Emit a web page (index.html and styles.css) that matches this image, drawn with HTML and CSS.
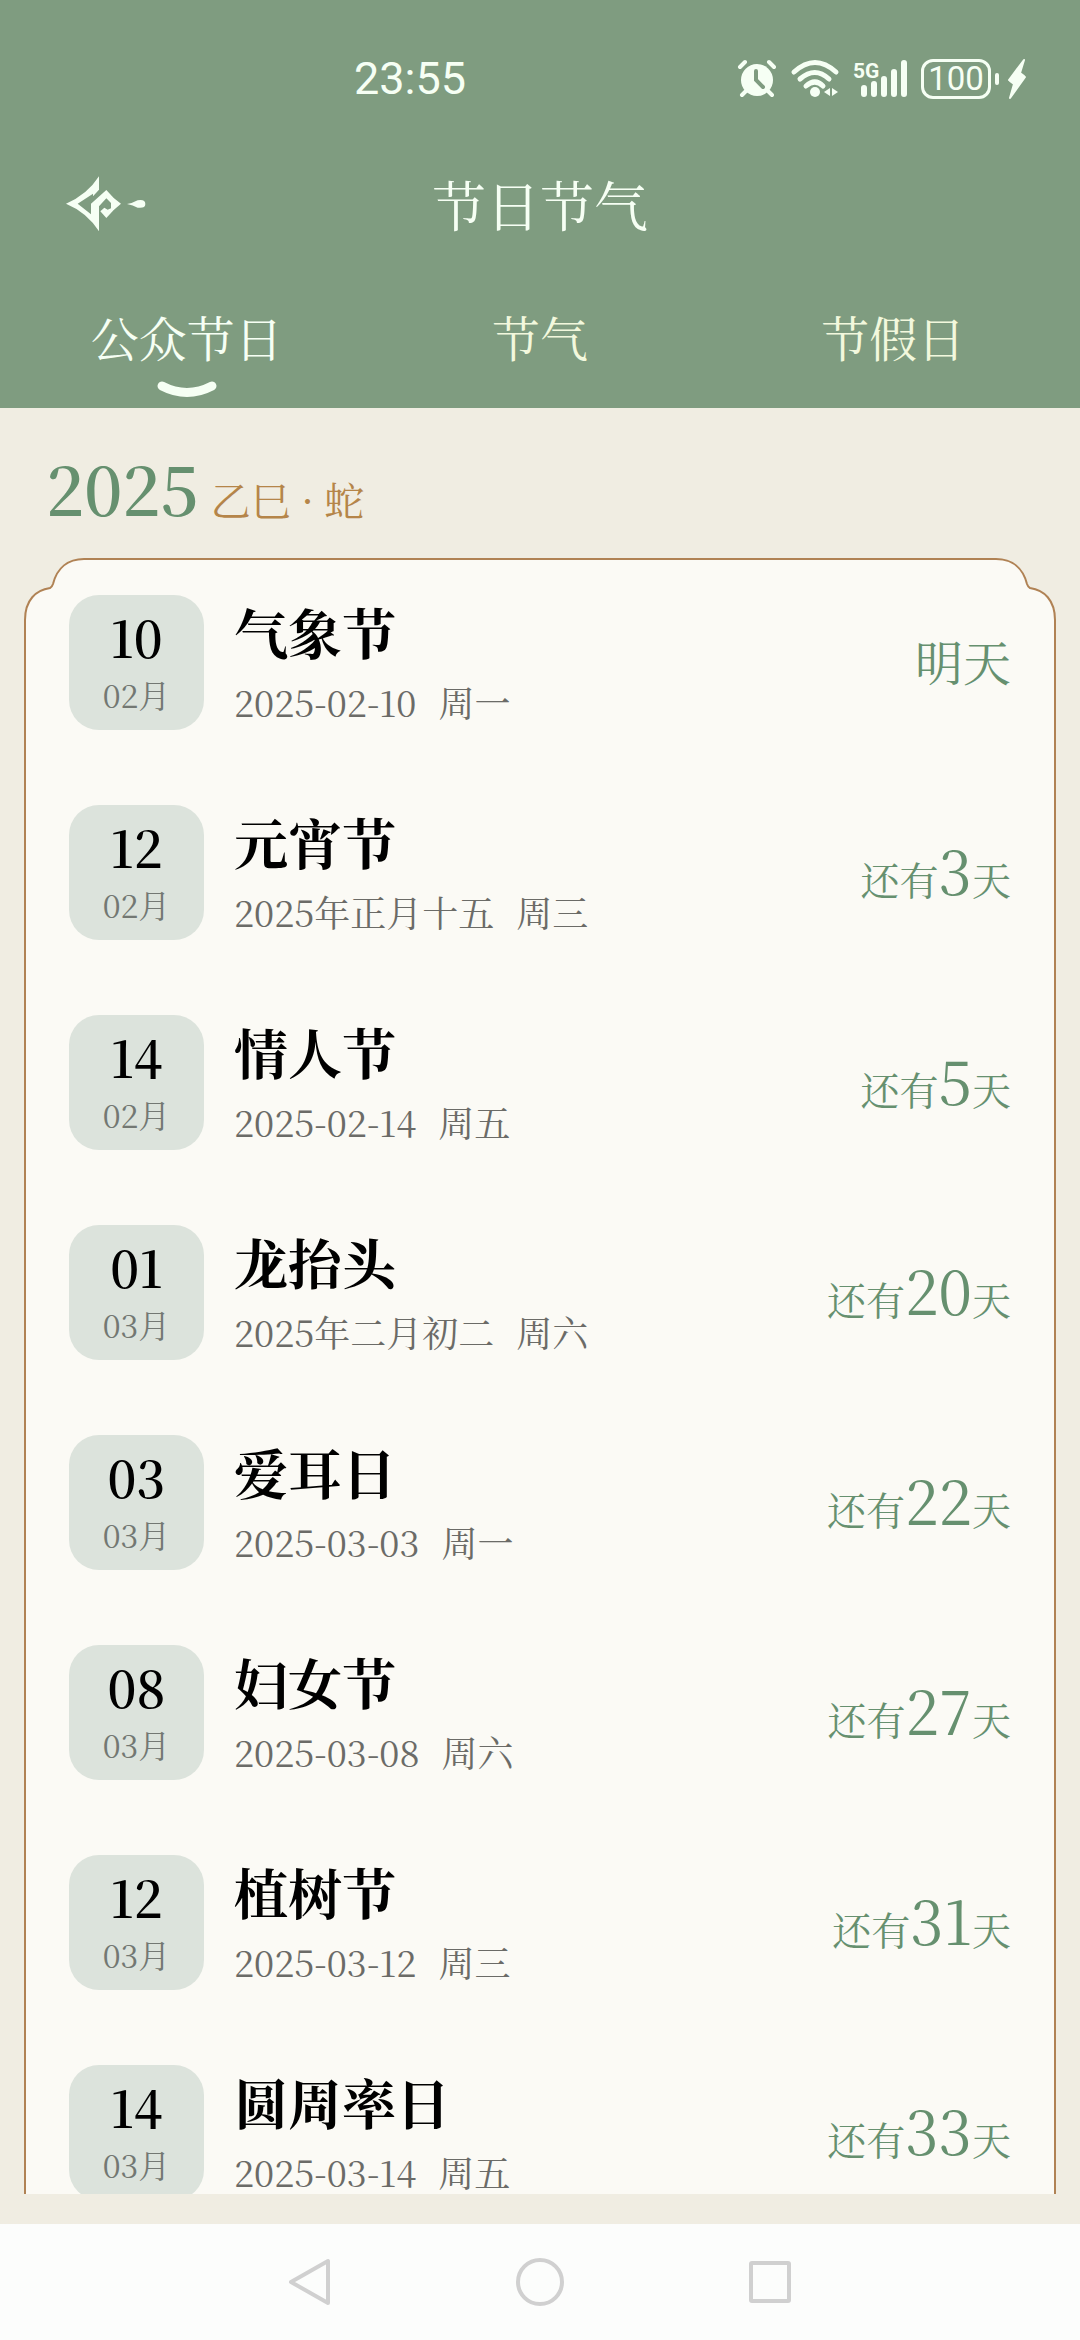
FILE: index.html
```
<!DOCTYPE html>
<html lang="zh-CN">
<head>
  <meta charset="UTF-8">
  <meta name="viewport" content="width=device-width, initial-scale=1.0">
  <title>节日节气</title>
  <link rel="stylesheet" href="styles.css">
</head>
<body>
  <header class="header">
    <div class="status-bar">
      <time class="clock">23:55</time>
      <div class="status-icons">
        <svg class="icon-alarm" width="40" height="38" viewBox="0 0 40 38" fill="#f6fff4">
          <circle cx="20" cy="20" r="16"/>
          <path d="M3 7L8 2M37 7l-5-5M9 31l-4 4M31 31l4 4" stroke="#f6fff4" stroke-width="4" stroke-linecap="round"/>
          <path d="M19 11v9l7 7" fill="none" stroke="#7f9c80" stroke-width="4" stroke-linecap="round"/>
        </svg>
        <svg class="icon-wifi" width="48" height="38" viewBox="0 0 48 38" fill="#f6fff4">
          <path d="M3 12Q24 -7 45 12M9 19Q24 6 38 19M15 26Q24 18 32 26" fill="none" stroke="#f6fff4" stroke-width="5" stroke-linecap="round"/>
          <circle cx="24" cy="32" r="5"/>
          <path d="M39 28v8l-6-4zM41 28v8l6-4z"/>
        </svg>
        <svg class="icon-signal" width="54" height="38" viewBox="0 0 54 38">
          <text x="0" y="18" class="network">5G</text>
          <path d="M11 28v6M21 24v10M31 19v15M41 12v22M51 3v31" stroke="#f6fff4" stroke-width="6" stroke-linecap="round"/>
        </svg>
        <span class="battery">100</span>
        <svg class="icon-bolt" width="18" height="40" viewBox="0 0 18 40" fill="#f6fff4">
          <path d="M16 1L1 21h5l-4 1 4 3-4 14 15-21h-5l4-1-4-3z" stroke="#f6fff4" stroke-width="2" stroke-linejoin="round"/>
        </svg>
      </div>
    </div>

    <div class="title-bar">
      <button class="back" aria-label="返回">
        <svg width="80" height="56" viewBox="17 21 240 168" fill="#f6fff4">
          <path d="M17 104Q80 78 116 22V62L98 82V74L52 104L92 136V104L138 63Q158 88 182 104Q158 122 138 147L120 127L132 116L142 122L152 118V102L138 88L116 112V187Q80 130 17 104Z"/>
          <path d="M200 105Q218 102 232 94Q255 90 255 105Q255 119 232 116Q218 108 200 105Z"/>
        </svg>
      </button>
      <h1>节日节气</h1>
    </div>

    <nav class="tabs">
      <a href="#festival" class="tab active">公众节日
        <svg class="tab-mark" width="60" height="18" viewBox="0 0 60 18">
          <path d="M5 5Q30 18 55 5" fill="none" stroke="#f6fff4" stroke-width="9" stroke-linecap="round"/>
        </svg>
      </a>
      <a href="#solar" class="tab">节气</a>
      <a href="#holiday" class="tab">节假日</a>
    </nav>
  </header>

  <main class="content">
    <h2 class="year">2025<span class="ganzhi">乙巳 · 蛇</span></h2>

    <div class="card">
      <svg class="corner corner-left" width="60" height="62" viewBox="0 0 60 62">
        <path class="corner-bg" d="M0 62V0H60V1C44 1 33 10 29 26Q28 29 26 30C12 32 1 42 1 62Z"/>
        <path class="corner-line" d="M1 62C1 42 12 32 26 30Q28 29 29 26C33 10 44 1 60 1"/>
      </svg>
      <svg class="corner corner-right" width="60" height="62" viewBox="0 0 60 62">
        <path class="corner-bg" d="M60 62V0H0V1C16 1 27 10 31 26Q32 29 34 30C48 32 59 42 59 62Z"/>
        <path class="corner-line" d="M59 62C59 42 48 32 34 30Q32 29 31 26C27 10 16 1 0 1"/>
      </svg>

      <ul class="list">
        <li class="item">
          <div class="date"><span class="day">10</span><span class="month">02月</span></div>
          <div class="info">
            <h3>气象节</h3>
            <p><span>2025-02-10</span><span>周一</span></p>
          </div>
          <div class="remain tomorrow">明天</div>
        </li>
        <li class="item">
          <div class="date"><span class="day">12</span><span class="month">02月</span></div>
          <div class="info">
            <h3>元宵节</h3>
            <p><span>2025年正月十五</span><span>周三</span></p>
          </div>
          <div class="remain">还有<b>3</b>天</div>
        </li>
        <li class="item">
          <div class="date"><span class="day">14</span><span class="month">02月</span></div>
          <div class="info">
            <h3>情人节</h3>
            <p><span>2025-02-14</span><span>周五</span></p>
          </div>
          <div class="remain">还有<b>5</b>天</div>
        </li>
        <li class="item">
          <div class="date"><span class="day">01</span><span class="month">03月</span></div>
          <div class="info">
            <h3>龙抬头</h3>
            <p><span>2025年二月初二</span><span>周六</span></p>
          </div>
          <div class="remain">还有<b>20</b>天</div>
        </li>
        <li class="item">
          <div class="date"><span class="day">03</span><span class="month">03月</span></div>
          <div class="info">
            <h3>爱耳日</h3>
            <p><span>2025-03-03</span><span>周一</span></p>
          </div>
          <div class="remain">还有<b>22</b>天</div>
        </li>
        <li class="item">
          <div class="date"><span class="day">08</span><span class="month">03月</span></div>
          <div class="info">
            <h3>妇女节</h3>
            <p><span>2025-03-08</span><span>周六</span></p>
          </div>
          <div class="remain">还有<b>27</b>天</div>
        </li>
        <li class="item">
          <div class="date"><span class="day">12</span><span class="month">03月</span></div>
          <div class="info">
            <h3>植树节</h3>
            <p><span>2025-03-12</span><span>周三</span></p>
          </div>
          <div class="remain">还有<b>31</b>天</div>
        </li>
        <li class="item">
          <div class="date"><span class="day">14</span><span class="month">03月</span></div>
          <div class="info">
            <h3>圆周率日</h3>
            <p><span>2025-03-14</span><span>周五</span></p>
          </div>
          <div class="remain">还有<b>33</b>天</div>
        </li>
      </ul>
    </div>
  </main>

  <footer class="system-nav">
    <button aria-label="后退">
      <svg width="48" height="48" viewBox="0 0 48 48"><path d="M42 3V45L5 24Z"/></svg>
    </button>
    <button aria-label="主页">
      <svg width="48" height="48" viewBox="0 0 48 48"><circle cx="24" cy="24" r="22"/></svg>
    </button>
    <button aria-label="最近任务">
      <svg width="48" height="48" viewBox="0 0 48 48"><rect x="5" y="5" width="38" height="38" rx="1"/></svg>
    </button>
  </footer>
</body>
</html>
```
FILE: styles.css
```
* {
  margin: 0;
  padding: 0;
  box-sizing: border-box;
}
body {
  height: 100vh;
  display: flex;
  flex-direction: column;
  background: #f0ede2;
  font-family: "Noto Serif CJK SC", "Noto Sans CJK SC", serif;
  font-variant-numeric: tabular-nums;
  color: #000;
}
button {
  border: none;
  background: none;
  cursor: pointer;
}
svg {
  display: block;
  overflow: visible;
}

/* header */
.header {
  background: #7f9c80;
  color: #f6fff4;
}
.status-bar {
  height: 158px;
  padding: 0 54px 0 354px;
  display: flex;
  justify-content: space-between;
  align-items: center;
  font-family: Roboto, "Noto Sans CJK SC", sans-serif;
}
.clock {
  font-size: 45px;
  line-height: 56px;
}
.status-icons {
  display: flex;
  align-items: center;
  gap: 14px;
}
.network {
  font-size: 21px;
  font-weight: 700;
  fill: #f6fff4;
}
.battery {
  position: relative;
  width: 70px;
  height: 40px;
  margin-right: 3px;
  border: 3px solid #f6fff4;
  border-radius: 12px;
  font-size: 33px;
  line-height: 34px;
  text-align: center;
}
.battery::after {
  content: "";
  position: absolute;
  top: 11px;
  right: -11px;
  width: 4px;
  height: 12px;
  border-radius: 2px;
  background: #f6fff4;
}
.title-bar {
  height: 92px;
  padding: 0 66px;
  display: grid;
  grid-template-columns: 80px 1fr 80px;
  align-items: center;
}
.title-bar h1 {
  font-size: 54px;
  line-height: 64px;
  font-weight: 400;
  text-align: center;
}
.tabs {
  height: 158px;
  padding: 57px 10px 0;
  display: grid;
  grid-template-columns: repeat(3, 1fr);
}
.tab {
  font-size: 48px;
  line-height: 60px;
  color: #f2f8dd;
  text-align: center;
  text-decoration: none;
}
.tab.active {
  color: #f6fff4;
}
.tab-mark {
  margin: 14px auto 0;
}

/* list */
.content {
  flex: 1;
  min-height: 0;
  margin-bottom: 30px;
  padding: 0 24px;
  overflow: hidden;
}
.year {
  padding: 40px 22px 30px;
  display: flex;
  align-items: baseline;
  gap: 12px;
  font-size: 66px;
  line-height: 80px;
  font-weight: 600;
  color: #66906f;
}
.ganzhi {
  font-size: 40px;
  line-height: 40px;
  font-weight: 400;
  color: #b58549;
}
.card {
  position: relative;
  padding: 35px 43px;
  background: #fbfaf5;
  border: 2px solid #b08254;
}
.corner {
  position: absolute;
  top: -2px;
}
.corner-left {
  left: -2px;
}
.corner-right {
  right: -2px;
}
.corner-bg {
  fill: #f0ede2;
}
.corner-line {
  fill: none;
  stroke: #b08254;
  stroke-width: 2;
}
.list {
  position: relative;
  display: flex;
  flex-direction: column;
  gap: 75px;
  list-style: none;
}
.item {
  display: flex;
  align-items: center;
  gap: 30px;
}
.date {
  width: 135px;
  height: 135px;
  padding-top: 13px;
  display: flex;
  flex-direction: column;
  align-items: center;
  gap: 10px;
  border-radius: 30px;
  background: #dce3dc;
}
.day {
  font-size: 50px;
  line-height: 56px;
  font-weight: 600;
}
.month {
  font-size: 32px;
  line-height: 40px;
  color: #737873;
}
.info {
  flex: 1;
  padding-bottom: 2px;
}
.info h3 {
  font-size: 54px;
  line-height: 64px;
  font-weight: 700;
}
.info p {
  margin-top: 16px;
  display: flex;
  gap: 22px;
  font-size: 36px;
  line-height: 44px;
  color: #6b6b67;
}
.remain {
  padding-bottom: 8px;
  font-size: 39px;
  line-height: 1;
  color: #66906f;
}
.remain b {
  font-size: 60px;
  font-weight: 400;
}
.tomorrow {
  padding-bottom: 4px;
  font-size: 48px;
}

/* bottom system bar */
.system-nav {
  height: 116px;
  display: flex;
  justify-content: center;
  align-items: center;
  gap: 182px;
  background: #fcfdfc;
}
.system-nav svg {
  fill: none;
  stroke: #d0d0d0;
  stroke-width: 4;
  stroke-linejoin: round;
}
```
